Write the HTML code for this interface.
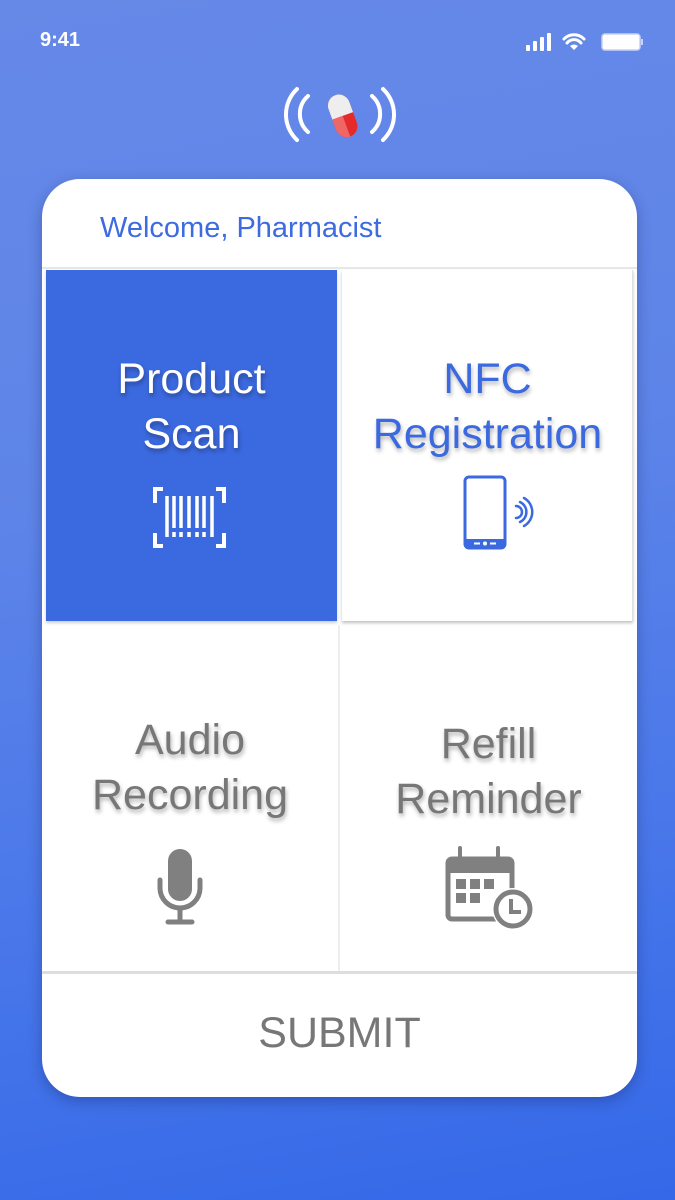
<!DOCTYPE html>
<html><head><style>
*{margin:0;padding:0;box-sizing:border-box}
body{width:675px;height:1200px;overflow:hidden;font-family:"Liberation Sans",sans-serif;background:linear-gradient(170deg,#6689e8 0%,#5d84e8 40%,#4a78ea 70%,#3468e8 100%);position:relative}
.abs{position:absolute}
.card{left:42px;top:179px;width:595px;height:918px;background:#fff;border-radius:38px;box-shadow:0 4px 14px rgba(0,0,40,.25);overflow:hidden}
.t{position:absolute;text-align:center;font-size:43px;line-height:55px;text-shadow:1px 3px 4px rgba(0,0,0,.3)}
</style></head><body>
<div class="abs" style="left:40px;top:29px;color:#fff;font-weight:bold;font-size:20px">9:41</div>
<svg class="abs" style="left:524px;top:30px" width="122" height="24">
<rect x="2" y="15" width="4" height="6" rx="1" fill="#fff"/><rect x="9" y="11" width="4" height="10" rx="1" fill="#fff"/><rect x="16" y="7" width="4" height="14" rx="1" fill="#fff"/><rect x="23" y="3" width="4" height="18" rx="1" fill="#fff"/>
<path d="M40 9a14 14 0 0 1 20 0M43 13a9 9 0 0 1 14 0" stroke="#fff" stroke-width="3" fill="none" stroke-linecap="round"/><path d="M46 16l4 4 4-4a6 6 0 0 0-8 0z" fill="#fff"/>
<rect x="78" y="4" width="38" height="16" rx="3" fill="#fff" stroke="#c8d2f5" stroke-width="1.5"/><rect x="117" y="9" width="2" height="6" fill="#c8d2f5"/>
</svg>
<svg class="abs" style="left:280px;top:86px" width="120" height="60">
<g stroke="#fff" stroke-width="4" fill="none" stroke-linecap="round"><path d="M17 3a35 35 0 0 0 0 51"/><path d="M28 10a24 24 0 0 0 0 36"/><path d="M103 3a35 35 0 0 1 0 51"/><path d="M92 10a24 24 0 0 1 0 36"/></g>
<g transform="rotate(-20 62 28)"><rect x="51" y="8" width="22" height="44" rx="11" fill="#e52a2a"/><path d="M51 30V19a11 11 0 0 1 22 0v11z" fill="#eee"/><path d="M51 30h11v22a11 11 0 0 1-11-11z" fill="#e66"/></g>
</svg>
<div class="abs card">
<div class="abs" style="left:58px;top:33px;font-size:29px;color:#3d6be0">Welcome, Pharmacist</div>
<div class="abs" style="left:0;top:88px;width:595px;height:2px;background:#e6e6e6"></div>
<div class="abs" style="left:4px;top:91px;width:291px;height:351px;background:#3b69df;box-shadow:0 2px 3px rgba(0,0,0,.2)"></div>
<div class="abs" style="left:300px;top:91px;width:291px;height:351px;background:#fff;box-shadow:0 2px 3px rgba(0,0,0,.25);border-right:1px solid #e0e0e0"></div>
<div class="abs" style="left:296px;top:446px;width:2px;height:346px;background:#eee"></div>
<div class="abs" style="left:0;top:792px;width:595px;height:3px;background:#ddd"></div>
<div class="t" style="left:4px;width:291px;top:173px;color:#fff">Product<br>Scan</div>
<div class="t" style="left:300px;width:291px;top:173px;color:#3b69df">NFC<br>Registration</div>
<div class="t" style="left:0;width:296px;top:534px;color:#777">Audio<br>Recording</div>
<div class="t" style="left:298px;width:297px;top:538px;color:#777">Refill<br>Reminder</div>
<div class="abs" style="left:0;top:830px;width:595px;text-align:center;font-size:43px;color:#777">SUBMIT</div>
<svg class="abs" style="left:109px;top:307px" width="80" height="68" fill="none" stroke="#fff" stroke-width="4">
<path d="M12 3H4v14M4 47v13h8M65 3h8v14M73 47v13h-8"/>
<g stroke-width="3.5"><path d="M16 10v41M23 10v32M30 10v32M38 10v32M46 10v32M53 10v32M61 10v41"/><path d="M23 46v5M30 46v5M38 46v5M46 46v5M53 46v5"/></g>
</svg>
<svg class="abs" style="left:418px;top:296px" width="80" height="80">
<rect x="5" y="2" width="40" height="71" rx="4" fill="none" stroke="#3b69df" stroke-width="3"/>
<rect x="5" y="64" width="40" height="9" fill="#3b69df"/><circle cx="25" cy="68.5" r="2" fill="#fff"/><rect x="14" y="67.5" width="6" height="2" fill="#fff"/><rect x="30" y="67.5" width="6" height="2" fill="#fff"/>
<g stroke="#3b69df" stroke-width="2.5" fill="none" stroke-linecap="round"><path d="M56 31a6 6 0 0 1 0 12"/><path d="M60 27a11 11 0 0 1 0 20"/><path d="M64 23a16 16 0 0 1 0 28"/></g>
</svg>
<svg class="abs" style="left:114px;top:668px" width="60" height="80">
<rect x="12" y="2" width="24" height="52" rx="12" fill="#808080"/>
<path d="M4 33v8a20 20 0 0 0 40 0v-8" stroke="#808080" stroke-width="5" fill="none" stroke-linecap="round"/>
<path d="M24 61v12M12 75h24" stroke="#808080" stroke-width="5" stroke-linecap="round"/>
</svg>
<svg class="abs" style="left:402px;top:666px" width="95" height="90">
<rect x="4" y="14" width="64" height="60" rx="4" fill="none" stroke="#808080" stroke-width="5"/>
<rect x="4" y="14" width="64" height="14" fill="#808080"/>
<path d="M16 3v14M54 3v14" stroke="#808080" stroke-width="4" stroke-linecap="round"/>
<g fill="#808080"><rect x="12" y="34" width="10" height="10"/><rect x="26" y="34" width="10" height="10"/><rect x="40" y="34" width="10" height="10"/><rect x="12" y="48" width="10" height="10"/><rect x="26" y="48" width="10" height="10"/></g>
<circle cx="69" cy="64" r="21" fill="#fff"/><circle cx="69" cy="64" r="17" fill="none" stroke="#808080" stroke-width="5"/>
<path d="M67 54v13h10" stroke="#808080" stroke-width="4" fill="none"/>
</svg>
</div>
</body></html>
